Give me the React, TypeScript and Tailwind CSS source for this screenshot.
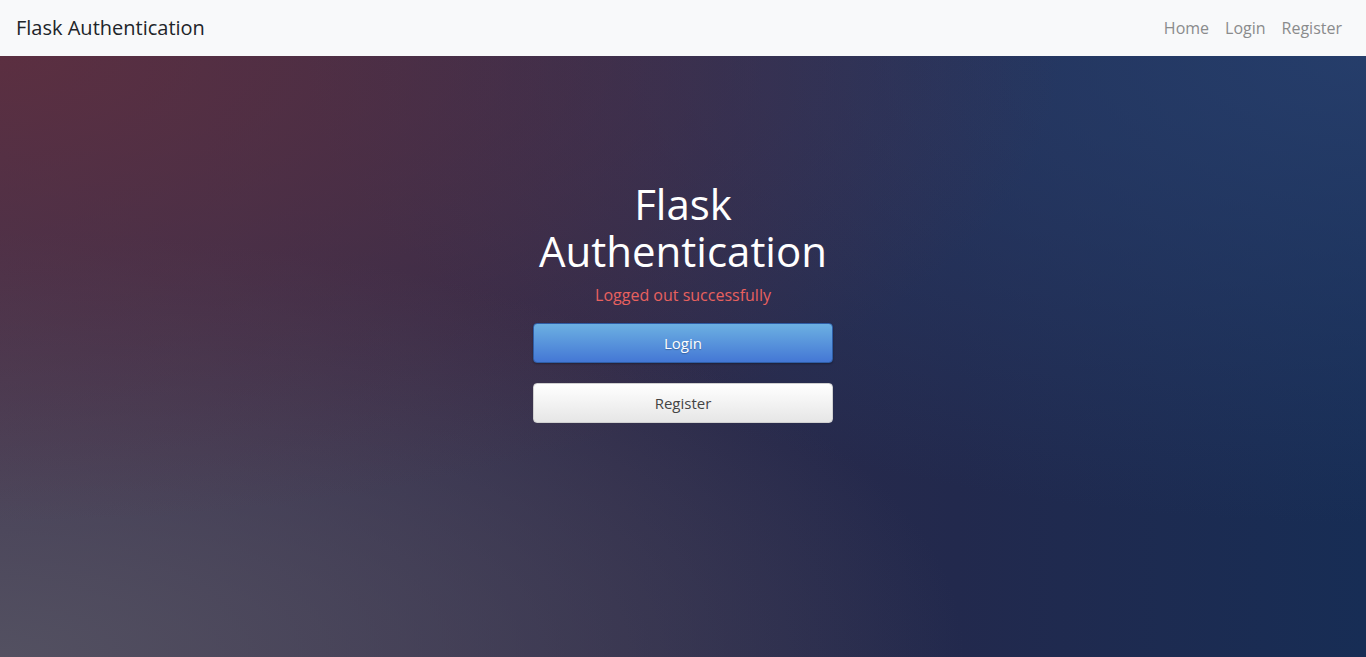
import React from 'react';

const navLinks = ['Home', 'Login', 'Register'];

// Страница выхода: навбар + центральный блок с кнопками
const App = () => {
  return (
    <div className="min-h-screen flex flex-col font-['Open_Sans',sans-serif]">
      {/* Навбар */}
      <nav className="h-14 bg-[#f8f9fa] flex items-center justify-between px-4">
        <a href="#" className="text-[20px] text-[#212529] leading-[30px]">
          Flask Authentication
        </a>
        <ul className="flex items-center">
          {navLinks.map((link) => (
            <li key={link}>
              <a href="#" className="block px-2 py-2 text-base text-[#8a8b8c]">
                {link}
              </a>
            </li>
          ))}
        </ul>
      </nav>

      {/* Фон с градиентом */}
      <main className="flex-1 bg-[radial-gradient(ellipse_at_0%_0%,rgba(96,46,62,0.85)_0%,rgba(96,46,62,0)_55%),radial-gradient(ellipse_at_0%_100%,rgba(84,82,98,0.95)_0%,rgba(84,82,98,0)_50%),radial-gradient(ellipse_at_100%_0%,rgba(40,64,110,0.85)_0%,rgba(40,64,110,0)_55%),linear-gradient(to_right,#3f3450_0%,#2e2b4a_45%,#22294d_70%,#172d55_100%)]">
        <div className="w-[300px] mx-auto pt-[124px] flex flex-col items-center">
          <h1 className="text-[42px] leading-[47px] text-white text-center">
            Flask Authentication
          </h1>
          <p className="mt-[9px] text-base leading-6 text-[#e8615f]">
            Logged out successfully
          </p>
          <button className="mt-4 w-full h-10 rounded-[4px] border border-[#2f5ea6] bg-[linear-gradient(to_bottom,#6cb0e2,#4477d5)] text-white text-[15px] [text-shadow:0_1px_1px_rgba(0,0,0,0.25)] shadow-[0_1px_2px_rgba(0,0,0,0.3)]">
            Login
          </button>
          <button className="mt-5 w-full h-10 rounded-[4px] border border-[#d0d0d0] bg-[linear-gradient(to_bottom,#ffffff,#e6e6e6)] text-[#444444] text-[15px]">
            Register
          </button>
        </div>
      </main>
    </div>
  );
};

export default App;
